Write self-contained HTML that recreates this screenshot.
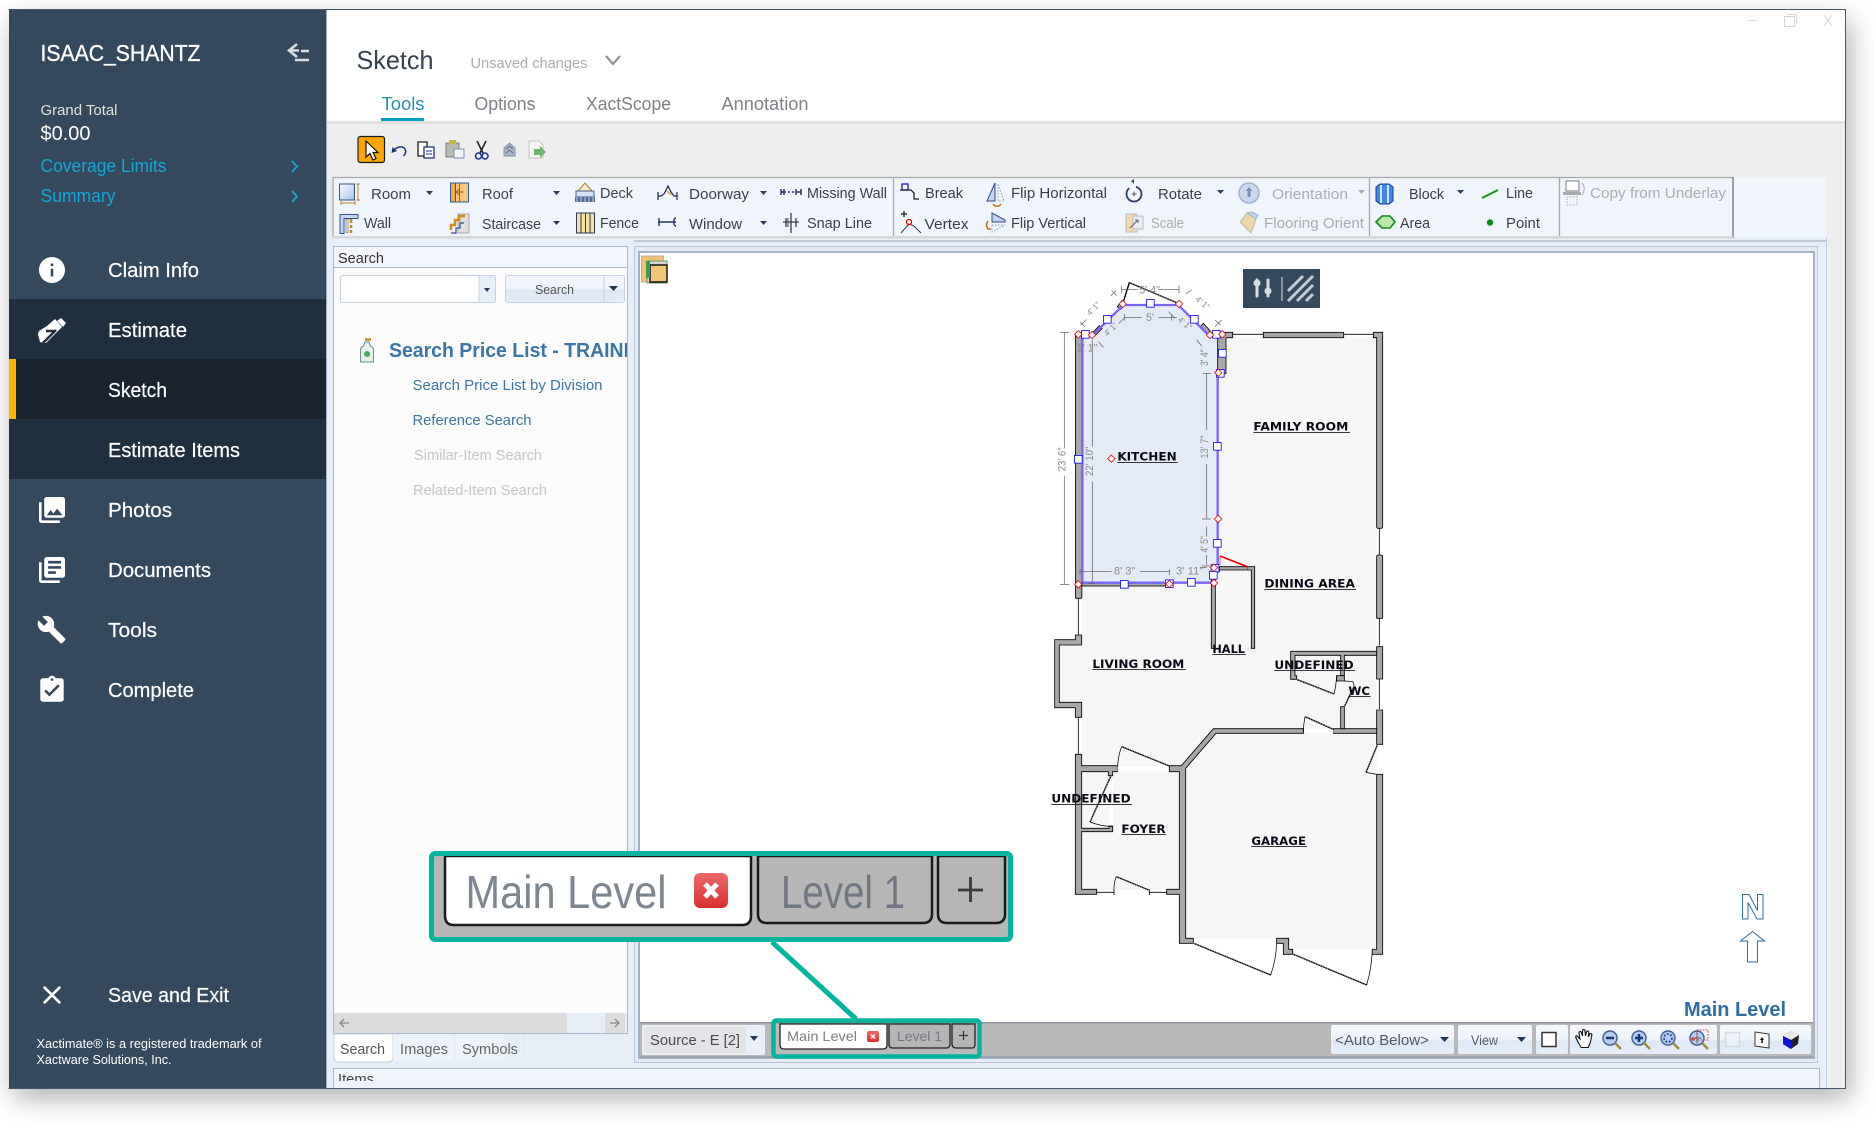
<!DOCTYPE html>
<html lang="en"><head><meta charset="utf-8"><title>Sketch</title>
<style>
html,body{margin:0;padding:0;background:#fff;width:1874px;height:1124px;overflow:hidden}
#sh{position:absolute;left:9px;top:10px;width:1837px;height:1078px;box-shadow:4px 10px 26px rgba(0,0,0,.32)}
svg{position:absolute;left:0;top:0;display:block}
text{font-family:"Liberation Sans",sans-serif;fill:#333;white-space:pre}
.w{fill:#fff}.s{fill:#e8eef8}
.r{font-size:15px;fill:#3a3f47}.d{font-size:15px;fill:#aaaeb4}
.n{font-size:20px;fill:#fff;stroke:#fff;stroke-width:.2}
.wl{fill:#a8a8a8;stroke:#000;stroke-width:2.5}
.bl{stroke:#000;stroke-width:2.5;fill:none}
.dr{fill:none;stroke:#000;stroke-width:4}
.dw{fill:none;stroke:#fff;stroke-width:1.4;stroke-dasharray:4 4}
.lb{font-family:"DejaVu Sans",sans-serif;font-weight:700;font-size:34px;fill:#0a0a14}
.dm{font-size:33px;fill:#8a8a86}
.dl{stroke:#666;stroke-width:2.2;fill:none}
</style></head><body>
<div id="sh"></div>
<svg width="1874" height="1124" viewBox="0 0 1874 1124" xmlns="http://www.w3.org/2000/svg">
<defs>
<linearGradient id="bt" x1="0" y1="0" x2="0" y2="1"><stop offset="0" stop-color="#f3f7fc"/><stop offset=".5" stop-color="#eef3fa"/><stop offset=".55" stop-color="#dde7f4"/><stop offset="1" stop-color="#e6edf7"/></linearGradient>
<linearGradient id="rm" x1="0" y1="0" x2="1" y2="1"><stop offset="0" stop-color="#fff"/><stop offset="1" stop-color="#9fc1ee"/></linearGradient>
<linearGradient id="xr" x1="0" y1="0" x2="0" y2="1"><stop offset="0" stop-color="#ef6a6a"/><stop offset="1" stop-color="#d8312f"/></linearGradient>
<clipPath id="cp"><rect x="333" y="330" width="294" height="60"/></clipPath>
<clipPath id="ci"><rect x="330" y="1066" width="100" height="15"/></clipPath>
<rect id="h" x="-11.5" y="-11.5" width="23" height="23" fill="#fff" stroke="#1414f0" stroke-width="2.6"/>
<path id="k" d="M0-11L11 0 0 11-11 0Z" fill="#fff" stroke="#e80000" stroke-width="2.4"/>
<g id="mg"><circle cx="8" cy="8" r="7" fill="#b6cdf0" stroke="#3d5f8f" stroke-width="1.4"/><path d="M13 13l6 6" stroke="#a08a3c" stroke-width="2.4"/></g>
</defs>

<!-- window -->
<rect x="9" y="10" width="1837" height="1078" fill="#eeeeee"/>
<rect x="327" y="10" width="1518" height="112" fill="#fff"/>
<rect x="327" y="121" width="1518" height="3" fill="#e0e0e0"/>
<rect x="327" y="237" width="1499" height="851" fill="#e8eef7"/>
<path d="M8.5 9.5H1845.5V1088.5H8.500" fill="none" stroke="#46566a" stroke-width="1"/>

<!-- sidebar -->
<rect x="9" y="10" width="317" height="1078" fill="#35495e"/>
<rect x="9" y="299" width="317" height="180" fill="#202f3e"/>
<rect x="9" y="359" width="317" height="60" fill="#1a242e"/>
<rect x="9" y="359" width="7" height="60" fill="#fdb400"/>
<rect x="326" y="10" width="1" height="1078" fill="#9db0c4"/>

<text x="40.500" y="61" font-size="23" textLength="160" lengthAdjust="spacingAndGlyphs" style="fill:#fff" stroke="#fff" stroke-width=".35">ISAAC_SHANTZ</text>
<path d="M297 44l-8 6.500 8 6.500M290 50.500h9M301 51h8M295 60h14" fill="none" stroke="#d7dde3" stroke-width="2.600"/>
<text x="40.500" y="115" font-size="15" textLength="77" lengthAdjust="spacingAndGlyphs" style="fill:#dfe3dc">Grand Total</text>
<text x="40.500" y="140" font-size="20" textLength="50" lengthAdjust="spacingAndGlyphs" style="fill:#fff">$0.00</text>
<text x="40.500" y="172" font-size="18" textLength="126" lengthAdjust="spacingAndGlyphs" style="fill:#13a8d4">Coverage Limits</text>
<text x="40.500" y="202" font-size="18" textLength="75" lengthAdjust="spacingAndGlyphs" style="fill:#13a8d4">Summary</text>
<path d="M292 161l5 5.500-5 5.500M292 191l5 5.500-5 5.500" fill="none" stroke="#13a8d4" stroke-width="1.800"/>

<g class="nv">
<text class="n" x="108" y="277" textLength="91" lengthAdjust="spacingAndGlyphs">Claim Info</text>
<text class="n" x="108" y="337" textLength="79" lengthAdjust="spacingAndGlyphs">Estimate</text>
<text class="n" x="108" y="397" textLength="59" lengthAdjust="spacingAndGlyphs">Sketch</text>
<text class="n" x="108" y="457" textLength="132" lengthAdjust="spacingAndGlyphs">Estimate Items</text>
<text class="n" x="108" y="517" textLength="64" lengthAdjust="spacingAndGlyphs">Photos</text>
<text class="n" x="108" y="577" textLength="103" lengthAdjust="spacingAndGlyphs">Documents</text>
<text class="n" x="108" y="637" textLength="49" lengthAdjust="spacingAndGlyphs">Tools</text>
<text class="n" x="108" y="697" textLength="86" lengthAdjust="spacingAndGlyphs">Complete</text>
<text class="n" x="108" y="1002" textLength="121" lengthAdjust="spacingAndGlyphs">Save and Exit</text>
</g>
<text x="36.500" y="1048" font-size="13" textLength="225" lengthAdjust="spacingAndGlyphs" style="fill:#fff">Xactimate® is a registered trademark of</text>
<text x="36.500" y="1064" font-size="13" textLength="135" lengthAdjust="spacingAndGlyphs" style="fill:#fff">Xactware Solutions, Inc.</text>

<g fill="#fff">
<path transform="translate(36.400 254.400) scale(1.300)" d="M12 2C6.480 2 2 6.480 2 12s4.480 10 10 10 10-4.480 10-10S17.520 2 12 2zm1 15h-2v-6h2v6zm0-8h-2V7h2v2z"/>
<path d="M39 331l8-5 8-7 7 8-16 16-6-1z"/><path d="M39 331l-1 3 2 8 6 1z"/><path d="M57 321l4-3 5 5-3 4z"/><path d="M46 331h9M43 343l13-13" stroke="#202f3e" stroke-width="2.500" fill="none"/>
<path transform="translate(36.400 494.400) scale(1.300)" d="M22 16V4c0-1.100-.9-2-2-2H8c-1.100 0-2 .9-2 2v12c0 1.100.9 2 2 2h12c1.100 0 2-.9 2-2zm-11-4l2.030 2.710L16 11l4 5H8l3-4zM2 6v14c0 1.100.9 2 2 2h14v-2H4V6H2z"/>
<path transform="translate(36.400 554.400) scale(1.300)" d="M4 6H2v14c0 1.100.9 2 2 2h14v-2H4V6zm16-4H8c-1.100 0-2 .9-2 2v12c0 1.100.9 2 2 2h12c1.100 0 2-.9 2-2V4c0-1.100-.9-2-2-2zm-1 9H9V9h10v2zm-4 4H9v-2h6v2zm4-8H9V5h10v2z"/>
<path transform="translate(36.500 614.500) scale(1.260)" d="M22.700 19l-9.100-9.100c.9-2.300.4-5-1.500-6.900-2-2-5-2.400-7.400-1.300L9 6 6 9 1.600 4.700C.4 7.100.9 10.100 2.900 12.100c1.900 1.900 4.600 2.400 6.900 1.500l9.100 9.100c.4.4 1 .4 1.400 0l2.300-2.300c.5-.4.5-1.100.1-1.400z"/>
<path transform="translate(36.400 674.400) scale(1.300)" d="M19 3h-4.180C14.400 1.840 13.300 1 12 1c-1.300 0-2.400.84-2.820 2H5c-1.100 0-2 .9-2 2v14c0 1.100.9 2 2 2h14c1.100 0 2-.9 2-2V5c0-1.100-.9-2-2-2zm-7 0c.55 0 1 .45 1 1s-.45 1-1 1-1-.45-1-1 .45-1 1-1zm-2 14l-4-4 1.410-1.410L10 14.170l6.590-6.590L18 9l-8 8z"/>
<path transform="translate(36.400 979.400) scale(1.300)" d="M19 6.410L17.590 5 12 10.590 6.410 5 5 6.410 10.590 12 5 17.590 6.410 19 12 13.410 17.590 19 19 17.590 13.410 12z"/>
</g>

<!-- header -->
<text x="356.500" y="69" font-size="26" textLength="77" lengthAdjust="spacingAndGlyphs" style="fill:#34414f">Sketch</text>
<text x="470.500" y="68" font-size="15" textLength="117" lengthAdjust="spacingAndGlyphs" style="fill:#a9adb2">Unsaved changes</text>
<path d="M606 56l7 8 7-8" fill="none" stroke="#8d9298" stroke-width="2.200"/>
<text x="381.500" y="110" font-size="18" textLength="43" lengthAdjust="spacingAndGlyphs" style="fill:#2b8fb0">Tools</text>
<text x="474.500" y="110" font-size="18" textLength="61" lengthAdjust="spacingAndGlyphs" style="fill:#7d8288">Options</text>
<text x="586" y="110" font-size="18" textLength="85" lengthAdjust="spacingAndGlyphs" style="fill:#7d8288">XactScope</text>
<text x="721.500" y="110" font-size="18" textLength="87" lengthAdjust="spacingAndGlyphs" style="fill:#7d8288">Annotation</text>
<rect x="381" y="118" width="43" height="3" fill="#00a0c4"/>
<path d="M1748 20.500h9" stroke="#ddd" stroke-width="1"/>
<path d="M1784.500 16.500h10v10h-10zM1787 14.500h9.500v9" fill="none" stroke="#d5d5d5"/>
<path d="M1824 15l8 11M1832 15l-8 11" stroke="#d5d5d5"/>

<!-- quick toolbar -->
<rect x="358" y="136.500" width="26.500" height="26" rx="2.500" fill="#ffa500" stroke="#1d1d1d" stroke-width="1.200"/>
<path d="M366 141v16l4-3.500 3 6.500 3-1.500-3-6h5z" fill="#fff" stroke="#111" stroke-width="1.200"/>
<path d="M391.500 153l1-6 4.500 4z" fill="#17367a"/><path d="M394 150c4-4 9-4 11-1 1.500 2.500.5 5-1.500 7" fill="none" stroke="#17367a" stroke-width="1.500"/>
<path d="M418 142h9l0 14h-9z" fill="#fff" stroke="#1c1c1c" stroke-width="1.300"/><path d="M424 147h10v11h-10z" fill="#fff" stroke="#1c2f7a" stroke-width="1.300"/><path d="M426 151h6M426 154h6" stroke="#1c2f7a"/>
<rect x="446" y="143" width="13" height="14" fill="#b9bdb1" stroke="#7b7f72"/><rect x="449" y="140" width="7" height="4" fill="#c8b63c"/><rect x="454" y="149" width="10" height="9" fill="#f2f5fb" stroke="#7a8fb5"/>
<path d="M477 141l6 12M486 141l-6 12" stroke="#222" stroke-width="1.600"/><circle cx="478.500" cy="156" r="3" fill="none" stroke="#24379a" stroke-width="1.600"/><circle cx="485" cy="156" r="3" fill="none" stroke="#24379a" stroke-width="1.600"/>
<path d="M504 148l5.500-5 5.500 5v8h-11z" fill="#aab6c6" stroke="#8492a6"/><path d="M506 149l3.500-3 3.500 3M506 153l3.500-3 3.500 3" stroke="#5f7183" fill="none"/>
<path d="M529 141h10l4 4v13h-14z" fill="#f4f4f4" stroke="#c4c4c4"/><path d="M534 149h6v-3l6 6-6 6v-3h-6z" fill="#70b56c"/>

<!-- ribbon -->
<rect x="332" y="177" width="1494" height="60" fill="#f0f4fb"/>
<path d="M333 237.500V177.500H1733V237.500H333" fill="none" stroke="#a7a9ab" stroke-width="1.300"/>
<path d="M1733 177v61" stroke="#8e9091" stroke-width="1.600"/>
<path d="M893.500 177v60M1369.500 177v60M1559.500 177v60" stroke="#a7a9ab" stroke-width="1.300"/>
<rect x="333" y="236" width="1400" height="2.500" fill="#d5d8da"/>

<text class="r" x="371" y="199" textLength="40" lengthAdjust="spacingAndGlyphs">Room</text>
<text class="r" x="482" y="199" textLength="31" lengthAdjust="spacingAndGlyphs">Roof</text>
<text class="r" x="600" y="198" textLength="33" lengthAdjust="spacingAndGlyphs">Deck</text>
<text class="r" x="689" y="199" textLength="60" lengthAdjust="spacingAndGlyphs">Doorway</text>
<text class="r" x="807" y="198" textLength="80" lengthAdjust="spacingAndGlyphs">Missing Wall</text>
<text class="r" x="925" y="198" textLength="38" lengthAdjust="spacingAndGlyphs">Break</text>
<text class="r" x="1011" y="198" textLength="96" lengthAdjust="spacingAndGlyphs">Flip Horizontal</text>
<text class="r" x="1158" y="199" textLength="44" lengthAdjust="spacingAndGlyphs">Rotate</text>
<text class="d" x="1272" y="199" textLength="76" lengthAdjust="spacingAndGlyphs">Orientation</text>
<text class="r" x="1409" y="199" textLength="35" lengthAdjust="spacingAndGlyphs">Block</text>
<text class="r" x="1506" y="198" textLength="27" lengthAdjust="spacingAndGlyphs">Line</text>
<text class="d" x="1590" y="198" textLength="136" lengthAdjust="spacingAndGlyphs">Copy from Underlay</text>

<text class="r" x="364" y="228" textLength="27" lengthAdjust="spacingAndGlyphs">Wall</text>
<text class="r" x="482" y="229" textLength="59" lengthAdjust="spacingAndGlyphs">Staircase</text>
<text class="r" x="600" y="228" textLength="39" lengthAdjust="spacingAndGlyphs">Fence</text>
<text class="r" x="689" y="229" textLength="53" lengthAdjust="spacingAndGlyphs">Window</text>
<text class="r" x="807" y="228" textLength="65" lengthAdjust="spacingAndGlyphs">Snap Line</text>
<text class="r" x="924.500" y="229" textLength="44" lengthAdjust="spacingAndGlyphs">Vertex</text>
<text class="r" x="1011" y="228" textLength="75" lengthAdjust="spacingAndGlyphs">Flip Vertical</text>
<text class="d" x="1151" y="228" textLength="33" lengthAdjust="spacingAndGlyphs">Scale</text>
<text class="d" x="1264" y="228" textLength="100" lengthAdjust="spacingAndGlyphs">Flooring Orient</text>
<text class="r" x="1400" y="228" textLength="30" lengthAdjust="spacingAndGlyphs">Area</text>
<text class="r" x="1506" y="228" textLength="34" lengthAdjust="spacingAndGlyphs">Point</text>

<g fill="#2a3b5a">
<path d="M426 191h7l-3.500 4zM553 191h7l-3.500 4zM760 191h7l-3.500 4zM553 221h7l-3.500 4zM760 221h7l-3.500 4zM1217 190h7l-3.500 4zM1457 190h7l-3.500 4z"/>
<path d="M1358 190h7l-3.500 4z" fill="#a8aeb8"/>
</g>

<!-- ribbon icons -->
<rect x="339.500" y="184" width="15" height="16" fill="url(#rm)" stroke="#37517e"/><path d="M358 184v16M356 184h4M356 200h4M341 203h14M341 201v4M355 201v4" stroke="#b98a2a" fill="none"/>
<rect x="450.500" y="183" width="18" height="19" fill="#f7c777" stroke="#2f5a9c"/><path d="M459.500 183v19M456 192l3.500-3M456 192l3.500 3M456 192h8" stroke="#9a6a1c" fill="none"/><rect x="450.500" y="183" width="5" height="19" fill="#f3ab3d" stroke="#2f5a9c"/>
<path d="M578 191l7-8 7 8z" fill="#f6eed0" stroke="#ab8526"/><rect x="576" y="191" width="18" height="6" fill="#d5e3f8" stroke="#4a5f88"/><rect x="575" y="197" width="20" height="5" fill="#506a9a"/><path d="M577 197v5M581 197v5M585 197v5M589 197v5M593 197v5" stroke="#fff" stroke-width=".7"/>
<path d="M658 196h3l3-2 4-8 3 6 3 4h3M658 192v8M677 192v8" fill="none" stroke="#1e2a4a" stroke-width="1.200"/><path d="M666 190l5 5" stroke="#b78720"/>
<path d="M781 189v6M784 189v6M788 192h2M792 192h2M796 189v6M801 189v6" stroke="#26306e" stroke-width="1.500"/><path d="M781 192h5M796 192h5" stroke="#26306e" stroke-width="1.500"/>
<rect x="902" y="184" width="6" height="6" fill="#fff" stroke="#1111e0" stroke-width="1.300"/><path d="M900 190h11l3 3v6h5" fill="none" stroke="#222" stroke-width="1.300"/><path d="M906 197h.1M910 197h.1" stroke="#556" stroke-width="1.500"/>
<path d="M995 183v18h-8z" fill="#c6d5ee" stroke="#2c4b82"/><path d="M998 184v17l6 0z" fill="none" stroke="#8ea3c5" stroke-dasharray="1.500 1.500"/><path d="M993 204c2 3 6 3 8 0" fill="none" stroke="#b66e10" stroke-width="1.500"/>
<circle cx="1134" cy="194" r="7.500" fill="#f5f7fc" stroke="#2b3e6e" stroke-width="1.800" stroke-dasharray="30 7"/><path d="M1134 184l-3-3 3-2z" fill="#2b3e6e"/><path d="M1131.500 194h5M1134 191.500v5" stroke="#333" stroke-width=".8"/>
<circle cx="1249" cy="193" r="10" fill="#cad8ee" stroke="#a3b4d2" stroke-width="1.500"/><path d="M1249 187l-3.500 4h2v6h3v-6h2z" fill="#7d8fb0"/>
<path d="M1376 187l4-3h9l4 3v14l-4 3h-9l-4-3z" fill="#3d86ee" stroke="#143f9e"/><path d="M1381 185v18M1388 185v18" stroke="#d8e6fb" stroke-width="2"/>
<path d="M1482 198l16-8" stroke="#119a11" stroke-width="2"/>
<rect x="1566" y="181" width="13" height="10" fill="#fff" stroke="#777"/><rect x="1563" y="192" width="18" height="3" fill="#aaa"/><rect x="1567" y="197" width="10" height="8" fill="none" stroke="#aaa" stroke-dasharray="1.500 1.500"/><path d="M1582 183c3 3 3 8 0 12" fill="none" stroke="#aaa"/>

<path d="M340 214.500h18v4h-14v15h-4z" fill="#c7d6ef" stroke="#32528c"/><path d="M346 219.500h2v13h-2z" fill="#eee" stroke="#99a"/><path d="M351 219v4M351 225v3M351 230v3" stroke="#c09215" stroke-width="2.500"/>
<rect x="458" y="214" width="11" height="19" fill="#ddd" stroke="#aaa"/><path d="M451 230v-5h4v-5h4v-4h6" fill="none" stroke="#d08a1f" stroke-width="2.500"/><path d="M451 233h5v-5h4v-5h4" fill="none" stroke="#324d89" stroke-width="1.200"/>
<rect x="576.500" y="213" width="18" height="20" fill="#f6e3a3" stroke="#2d3a55"/><path d="M581 213v20M585.500 213v20M590 213v20" stroke="#2d3a55"/>
<path d="M658 222h18M659 218v8M676 218c-3 0-3 8 0 8" fill="none" stroke="#27336f" stroke-width="1.400"/>
<path d="M783 222h16M791 213v20M786 218v9M796 218v9" stroke="#1c1c1c" stroke-width="1.100"/><path d="M788 218v9" stroke="#33418c"/>
<path d="M901 214h6M904 211v6" stroke="#333" stroke-width="1.400"/><path d="M901 233l8-9 5 2 7 7" fill="none" stroke="#33395e"/><circle cx="909" cy="222" r="2.500" fill="#fff" stroke="#e00" stroke-width="1.300"/>
<path d="M992 222v-9l13 7v2z" fill="#c7d6ee" stroke="#2c4b82"/><path d="M992 225h13l-13 7z" fill="none" stroke="#8ea3c5" stroke-dasharray="1.500 1.500"/><path d="M988 221c-2 3-2 5 0 8h3" fill="none" stroke="#b66e10" stroke-width="1.500"/>
<rect x="1126" y="214" width="11" height="18" fill="#f2d9a8" stroke="#b7bdc7"/><rect x="1133" y="216" width="10" height="13" fill="#e9edf3" stroke="#b7bdc7"/><path d="M1130 228l8-8M1138 220h-3M1138 220v3" stroke="#666"/>
<path d="M1240 222l7-9 9 6-5 14z" fill="#ecd8a6" stroke="#b9b9a0"/><path d="M1247 213l9 6 2-4-6-3z" fill="#bcd2ec" stroke="#a4b4c9"/>
<path d="M1376 222l6-6h8l5 6-5 6h-8z" fill="#b8e8a8" stroke="#12891b" stroke-width="1.600"/>
<circle cx="1490" cy="222.500" r="3.200" fill="#0c8a17"/>

<!-- search panel -->
<rect x="333" y="246" width="294" height="767" fill="#fbfbfc"/>
<path d="M333.500 1034V246.500H627.500V1034" fill="none" stroke="#a9b7cf"/>
<rect x="334" y="247" width="293" height="20" fill="#f3f6fc"/><path d="M334 267.500h293" stroke="#a9b7cf"/>
<text x="338" y="263" font-size="15" textLength="46" lengthAdjust="spacingAndGlyphs">Search</text>
<rect x="340.500" y="275.500" width="155" height="27" rx="2" fill="#fff" stroke="#c6d3e6"/><rect x="479" y="276" width="16" height="26" fill="#e8eef8"/><path d="M479 276v26" stroke="#c6d3e6"/><path d="M484 288h6l-3 4z" fill="#2a3b5a"/>
<rect x="505.500" y="275.500" width="119" height="27" rx="2" fill="url(#bt)" stroke="#c6d3e6"/><path d="M604 276v26" stroke="#c6d3e6"/><path d="M609 286h9l-4.500 5z" fill="#22344f"/>
<text x="535" y="294" font-size="13" textLength="39" lengthAdjust="spacingAndGlyphs" style="fill:#555">Search</text>
<path d="M365 342h4l1.500 4c2 .8 3 2 3 4v12h-13v-12c0-2 1-3.200 3-4z" fill="#e6efe8" stroke="#6a8f96"/><rect x="365" y="338" width="6" height="3" fill="#c6a23d"/><circle cx="367" cy="354" r="3" fill="#45a85c"/>
<g clip-path="url(#cp)"><text x="389" y="357" font-size="20" font-weight="700" textLength="240" lengthAdjust="spacingAndGlyphs" style="fill:#3a75a5">Search Price List - TRAINI</text></g>
<text x="412.500" y="390" font-size="15" textLength="190" lengthAdjust="spacingAndGlyphs" style="fill:#3c75a4">Search Price List by Division</text>
<text x="412.500" y="425" font-size="15" textLength="119" lengthAdjust="spacingAndGlyphs" style="fill:#3c75a4">Reference Search</text>
<text x="414" y="460" font-size="15" textLength="128" lengthAdjust="spacingAndGlyphs" style="fill:#c4c7c9">Similar-Item Search</text>
<text x="413" y="495" font-size="15" textLength="134" lengthAdjust="spacingAndGlyphs" style="fill:#c4c7c9">Related-Item Search</text>
<rect x="334" y="1013" width="233" height="20" fill="#dcdcdc"/><rect x="605" y="1013" width="20" height="20" fill="#dcdcdc"/>
<path d="M349 1023h-8M344 1019l-4 4 4 4M610 1023h8M615 1019l4 4-4 4" fill="none" stroke="#8a8a8a" stroke-width="1.300"/>
<path d="M333.500 1033.500H627.500" stroke="#a9b7cf"/>
<path d="M334 1034v23q0 5 5 5h49q5 0 5-5v-23z" fill="#fff" stroke="#c3d0e2"/>
<rect x="393" y="1034" width="112" height="26" fill="#edf2f9"/><path d="M454.500 1034v26M524 1034v26" stroke="#dde5f0"/>
<text x="340" y="1054" font-size="15" textLength="45" lengthAdjust="spacingAndGlyphs" style="fill:#555">Search</text>
<text x="400" y="1054" font-size="15" textLength="48" lengthAdjust="spacingAndGlyphs" style="fill:#666">Images</text>
<text x="462" y="1054" font-size="15" textLength="56" lengthAdjust="spacingAndGlyphs" style="fill:#666">Symbols</text>
<!-- items panel -->
<rect x="333.500" y="1068.500" width="1486" height="19" fill="#f0f4fb" stroke="#a9b7cf"/>
<rect x="334" y="1081" width="1485" height="7" fill="#eef3fb"/>
<rect x="1826" y="237" width="1" height="851" fill="#c0cde0"/>
<g clip-path="url(#ci)"><text x="338" y="1084" font-size="15" textLength="36" lengthAdjust="spacingAndGlyphs" style="fill:#444">Items</text></g>

<!-- sketch panel -->
<rect x="1818" y="241" width="8" height="823" fill="#e8eef7"/>
<path d="M634 241H1826" stroke="#bccadc" stroke-width="2"/>
<rect x="634.500" y="246.500" width="1183" height="816" fill="#e4ebf5" stroke="#b9c6da"/>
<rect x="639" y="252" width="1175" height="806" fill="#fff" stroke="#a5b3c8" stroke-width="2"/>
<rect x="640" y="1023" width="1173" height="33" fill="#b9b9b9"/>
<rect x="640" y="1022" width="1173" height="1.500" fill="#8f969e"/>
<rect x="640" y="1056" width="1173" height="2" fill="#9aa3ae"/>

<!-- layer icon -->
<rect x="641.500" y="256" width="22" height="26" fill="#f2c171" stroke="#b6b0a0"/><rect x="647" y="261" width="20" height="22" fill="#d6d6d0" stroke="#6c9862"/><rect x="650" y="265" width="17" height="17" fill="#f3c478" stroke="#151515" stroke-width="1.500"/><rect x="646" y="261" width="4" height="17" fill="#3a9f4a"/>

<!-- filter button -->
<rect x="1243" y="269" width="77" height="39" fill="#34495e"/>
<g stroke="#d7dde3" stroke-width="3" stroke-linecap="round"><path d="M1257 280v16M1268 280v16"/></g>
<circle cx="1257" cy="283" r="3.500" fill="#d7dde3"/><circle cx="1268" cy="291" r="3.500" fill="#d7dde3"/>
<path d="M1282 277v24" stroke="#a4afba" stroke-width="1.500"/>
<path d="M1288 291l15-15M1288 301l25-25M1297 301l16-16M1306 301l7-7" stroke="#c3cbd3" stroke-width="3" fill="none"/>

<!-- floor plan: upper group -->
<g transform="translate(1040 270) scale(.33333)">
<path d="M125 200H1010V2038H760L745 2007H437V1860H125V1297H58V1125H125Z" fill="#f6f6f6"/>
<path d="M127 205H155L250 108H415L510 205H533V890L522 938H127Z" fill="#e4eaf6"/>
<!-- top line -->
<path class="bl" d="M578 193H1005"/>
<rect class="wl" x="670" y="187" width="241" height="16"/>
<path class="wl" d="M1000 187H1028V770Q1028 775 1023 775H1014Q1010 775 1010 770V203H1000Z"/>
<path class="bl" d="M1018 775V855"/>
<path class="wl" d="M1014 855H1024Q1028 855 1028 860V1045H1010V860Q1010 855 1014 855Z"/>
<rect class="wl" x="106.500" y="190" width="19" height="795" rx="3"/>
<path class="wl" d="M533 187H578V203H558V310H533Z"/>
<rect class="wl" x="126" y="936" width="262" height="12"/>
<path class="wl" d="M538 890H644V1135H634V900H526V1135H514V905H538Z"/>
<path d="M540 858L622 890" stroke="#f00000" stroke-width="5"/><path d="M540 858V885M622 890V902" stroke="#f00000" stroke-width="2"/>
<path class="wl" d="M178 167L186 176 164 198 156 190Z" stroke-width="2"/>
<path class="wl" d="M482 168L490 160 512 184 503 192Z" stroke-width="2"/>
<path class="wl" d="M232 110L246 92 256 102 242 118Z" stroke-width="2"/>
<path d="M127 938H515L522 935M533 885V310M510 200L415 105H250L156 197M127 205V938" fill="none" stroke="#7a66ff" stroke-width="7"/>
<path d="M248 102L268 38 415 100" class="dr" stroke-width="3"/><path d="M268 38L415 100" class="dw"/>
<path d="M248 102L268 38" fill="none" stroke="#000" stroke-width="3"/>
<!-- dims -->
<path class="dl" d="M60 187H88M60 943H88M73 187V535M73 617V943"/>
<path class="dl" d="M157 210V530M157 635V940M145 940H165"/>
<path class="dl" d="M488 310H512M500 310V480M500 582V745M486 747H512M500 770V800M500 855V885M486 888H510"/>
<path class="dl" d="M120 905H215M300 905H390M388 897V915M120 897V912M480 893H500"/>
<path class="dl" d="M253 132V152M253 142H305M355 142H410M395 132V152"/>
<path class="dl" d="M244 47V70M244 58H293M355 58H417M417 47V70"/>
<path class="dl" d="M120 156L135 170M215 62L230 76M122 165L140 148M212 78L228 62M175 215L190 232M236 160L252 145M470 210L485 228M525 170L545 150M437 72L455 60M525 150L542 165M385 125L405 145"/>
<text class="dm" transform="translate(77 604) rotate(-90)" textLength="72" lengthAdjust="spacingAndGlyphs">23' 6"</text>
<text class="dm" transform="translate(159 618) rotate(-90)" textLength="88" lengthAdjust="spacingAndGlyphs">22' 10"</text>
<text class="dm" transform="translate(504 566) rotate(-90)" textLength="70" lengthAdjust="spacingAndGlyphs">13' 7"</text>
<text class="dm" transform="translate(504 288) rotate(-90)" textLength="50" lengthAdjust="spacingAndGlyphs">3' 4"</text>
<text class="dm" transform="translate(504 848) rotate(-90)" textLength="50" lengthAdjust="spacingAndGlyphs">4' 5"</text>
<text class="dm" x="222" y="914" textLength="64" lengthAdjust="spacingAndGlyphs">8' 3"</text>
<text class="dm" x="408" y="914" textLength="82" lengthAdjust="spacingAndGlyphs">3' 11"</text>
<text class="dm" x="318" y="153" textLength="24" lengthAdjust="spacingAndGlyphs">5'</text>
<text class="dm" x="298" y="70" textLength="62" lengthAdjust="spacingAndGlyphs">5' 4"</text>
<text class="dm" x="110" y="245" textLength="62" lengthAdjust="spacingAndGlyphs">1' 1"</text>
<text class="dm" style="font-size:25px" transform="translate(150 138) rotate(-45)" textLength="46" lengthAdjust="spacingAndGlyphs">4' 1"</text>
<text class="dm" style="font-size:25px" transform="translate(202 200) rotate(-45)" textLength="46" lengthAdjust="spacingAndGlyphs">4' 1"</text>
<text class="dm" style="font-size:25px" transform="translate(465 90) rotate(40)" textLength="46" lengthAdjust="spacingAndGlyphs">4' 1"</text>
<text class="dm" style="font-size:25px" transform="translate(412 152) rotate(40)" textLength="46" lengthAdjust="spacingAndGlyphs">4' 1"</text>
<!-- labels -->
<text class="lb" x="232" y="572" textLength="178" lengthAdjust="spacingAndGlyphs">KITCHEN</text><rect x="232" y="576" width="181" height="2.500" fill="#111"/>
<text class="lb" x="640" y="482" textLength="285" lengthAdjust="spacingAndGlyphs">FAMILY ROOM</text><rect x="640" y="486" width="290" height="2.500" fill="#111"/>
<text class="lb" x="673" y="953" textLength="272" lengthAdjust="spacingAndGlyphs">DINING AREA</text><rect x="673" y="957" width="275" height="2.500" fill="#111"/>
<!-- handles -->
<use href="#h" x="136" y="193"/><use href="#h" x="202" y="148"/><use href="#h" x="331" y="100"/><use href="#h" x="463" y="148"/><use href="#h" x="529" y="193"/><use href="#h" x="547" y="250"/><use href="#h" x="541" y="310"/><use href="#h" x="532" y="529"/><use href="#h" x="532" y="820"/><use href="#h" x="525" y="895"/><use href="#h" x="520" y="916"/><use href="#h" x="454" y="937"/><use href="#h" x="388" y="941"/><use href="#h" x="253" y="943"/><use href="#h" x="115" y="568"/>
<use href="#k" x="115" y="193"/><use href="#k" x="156" y="195"/><use href="#k" x="248" y="102"/><use href="#k" x="417" y="102"/><use href="#k" x="510" y="195"/><use href="#k" x="547" y="193"/><use href="#k" x="535" y="308"/><use href="#k" x="534" y="747"/><use href="#k" x="522" y="893"/><use href="#k" x="522" y="939"/><use href="#k" x="388" y="942"/><use href="#k" x="115" y="943"/><use href="#k" x="214" y="566"/>
</g>

<!-- floor plan: lower group -->
<g transform="translate(1040 580) scale(.33333)">
<path class="bl" d="M115 55V165M115 412V523M1018 115V197M1018 297V387"/>
<path class="wl" d="M1010 200H1028V297H1010Z"/>
<path class="wl" d="M1010 390H1028V493H1010Z"/>
<path class="wl" d="M106 165H125V195H58V367H125V412H106V383H44V179H106Z"/>
<path class="wl" d="M106 523H125V557H233V575H218V587H205V575H125V745H207V738H218V755H125V928H170V943H106Z"/>
<rect x="233" y="559" width="155" height="15" fill="#fff"/><rect x="207" y="590" width="12" height="146" fill="#fff"/>
<path class="wl" d="M388 557H424L520 446H790V460H528L437 565V1075H460V1090H418V943H380V928H418V575H388Z"/>
<path class="wl" d="M880 446H1010V460H880Z"/>
<path class="wl" d="M902 380H913V446H902Z"/>
<path class="wl" d="M752 214H1010V226H913V287H902V226H765V287H770V298H752Z"/>
<path class="wl" d="M890 287H913V303H890Z"/>
<rect x="1010" y="583" width="18" height="540" class="wl"/>
<path class="wl" d="M997 1108H1010V1123H997Z"/>
<rect x="998" y="1109" width="14" height="13" fill="#a8a8a8"/>
<path class="wl" d="M710 1075H746V1108H758V1123H730V1090H710Z"/>
<path class="bl" d="M170 937H222M328 937H380M222 926V945M328 928V945"/>
<rect x="795" y="448" width="85" height="12" fill="#fff"/>
<path d="M462 1090L692 1185M758 1122L980 1215M770 298L882 342M795 410L880 448M245 500L388 558M213 587L150 726M1012 495L978 577M229 890L326 930M913 380L942 320" class="dr"/>
<path d="M462 1090L692 1185M758 1122L980 1215M770 298L882 342M795 410L880 448M245 500L388 558M213 587L150 726M1012 495L978 577M229 890L326 930M913 380L942 320" class="dw"/>
<path d="M692 1185Q708 1140 710 1090M980 1215Q995 1165 997 1108M882 342Q888 320 890 287M790 460Q790 435 795 410M233 557Q235 525 245 500M150 726Q180 738 218 740M978 577L1010 583M222 926Q222 905 229 890M913 303L938 305Q942 310 942 320" fill="none" stroke="#000" stroke-width="2.200"/>
<text class="lb" x="517" y="219" textLength="98" lengthAdjust="spacingAndGlyphs">HALL</text><rect x="517" y="222" width="100" height="2.500" fill="#111"/>
<text class="lb" x="157" y="264" textLength="276" lengthAdjust="spacingAndGlyphs">LIVING ROOM</text><rect x="157" y="267" width="280" height="2.500" fill="#111"/>
<text class="lb" x="703" y="267" textLength="238" lengthAdjust="spacingAndGlyphs">UNDEFINED</text><rect x="703" y="270" width="242" height="2.500" fill="#111"/>
<text class="lb" x="925" y="345" textLength="65" lengthAdjust="spacingAndGlyphs">WC</text><rect x="925" y="348" width="67" height="2.500" fill="#111"/>
<text class="lb" x="34" y="668" textLength="238" lengthAdjust="spacingAndGlyphs">UNDEFINED</text><rect x="34" y="672" width="242" height="2.500" fill="#111"/>
<text class="lb" x="244" y="759" textLength="133" lengthAdjust="spacingAndGlyphs">FOYER</text><rect x="244" y="762" width="134" height="2.500" fill="#111"/>
<text class="lb" x="634" y="795" textLength="164" lengthAdjust="spacingAndGlyphs">GARAGE</text><rect x="634" y="798" width="167" height="2.500" fill="#111"/>
</g>

<!-- north arrow -->
<path d="M1742.500 894.500h6.500l8.500 16v-16h5.500v24.500h-6l-9-16.500v16.500h-5.500z" fill="#fff" stroke="#2f6ea5" stroke-width="1"/>
<path d="M1752.500 931.500l12 9.500h-7v21h-10v-21h-7z" fill="#fff" stroke="#2f6ea5" stroke-width="1"/>
<text x="1684" y="1016" font-size="20" font-weight="700" textLength="102" lengthAdjust="spacingAndGlyphs" style="fill:#2f6ea5">Main Level</text>

<!-- status bar -->
<rect x="642" y="1025" width="123" height="30" rx="2" fill="#e9eff8"/>
<rect x="644" y="1027" width="102" height="26" fill="#e4e4e6"/>
<text x="650" y="1045" font-size="15" textLength="90" lengthAdjust="spacingAndGlyphs" style="fill:#454a52">Source - E [2]</text>
<path d="M750 1036h8l-4 5z" fill="#22344f"/>

<rect x="1331" y="1025" width="123" height="29" rx="2" fill="url(#bt)"/>
<text x="1335" y="1045" font-size="15" textLength="94" lengthAdjust="spacingAndGlyphs" style="fill:#555a64">&lt;Auto Below&gt;</text>
<path d="M1440 1037h9l-4.500 5z" fill="#22344f"/>
<rect x="1458" y="1025" width="74" height="29" rx="2" fill="url(#bt)"/>
<text x="1471" y="1045" font-size="14" textLength="27" lengthAdjust="spacingAndGlyphs" style="fill:#555a64">View</text>
<path d="M1517 1037h9l-4.500 5z" fill="#22344f"/>
<rect x="1536" y="1025" width="32" height="29" rx="2" fill="url(#bt)"/>
<rect x="1542" y="1032.500" width="14" height="14" fill="#fff" stroke="#333" stroke-width="1.500"/>
<rect x="1570" y="1025" width="147" height="29" rx="2" fill="url(#bt)"/>
<rect x="1720" y="1025" width="91" height="29" rx="2" fill="url(#bt)"/>
<path d="M1578 1042l-2-4c-1-2 1-3 2-1l2 2-1-6c0-2 2-2 2.500 0l1 3 0-5c0-2 2.500-2 2.500 0l.5 5 1-4c.5-2 2.500-1 2.300 1l-.5 4 1.500-3c1-1 2.500 0 2 1.500l-1.500 7-2 5h-7z" fill="#fff" stroke="#111" stroke-width="1.100"/>
<use href="#mg" x="1602" y="1030"/><path d="M1606 1038h8" stroke="#17367a" stroke-width="2.500"/>
<use href="#mg" x="1631" y="1030"/><path d="M1635 1038h8M1639 1034v8" stroke="#17367a" stroke-width="2.500"/>
<use href="#mg" x="1660" y="1030"/><circle cx="1668" cy="1038" r="4" fill="none" stroke="#2246a5" stroke-width="1.800" stroke-dasharray="2 1.500"/>
<use href="#mg" x="1689" y="1030"/><path d="M1693 1038h8M1697 1033v10" stroke="#555"/><rect x="1697" y="1030" width="11" height="10" fill="none" stroke="#e03a3a" stroke-dasharray="1.500 1.500"/><circle cx="1693" cy="1039" r="1.800" fill="#e03a3a"/>
<rect x="1725.500" y="1032.500" width="14" height="14" fill="#edf1f7" stroke="#d3d9e2" stroke-width="1.500"/>
<path d="M1755 1032l14 2v14l-14-2z" fill="#fff" stroke="#333"/><path d="M1762 1037l-2 3h1.300v3h1.500v-3h1.200z" fill="#111"/>
<path d="M1791 1031l8 4-1 9-7 5-8-5v-8z" fill="#222"/><path d="M1791 1031l8 4-8 5-8-4z" fill="#e9e9e9"/><path d="M1783 1036l8 4v9l-8-5z" fill="#1212d8"/>

<!-- small tabs -->
<path d="M780 1024v21q0 4 4 4h99q4 0 4-4v-21z" fill="#fff" stroke="#222" stroke-width="1.300"/>
<text x="787" y="1041" font-size="14" textLength="70" lengthAdjust="spacingAndGlyphs" style="fill:#7a8087">Main Level</text>
<rect x="867" y="1031" width="12" height="11" rx="2" fill="url(#xr)"/><path d="M871 1034.500l4 4M875 1034.500l-4 4" stroke="#fff" stroke-width="1.500"/>
<path d="M889 1024v20q0 4 4 4h53q4 0 4-4v-20z" fill="#b5b5b5" stroke="#222" stroke-width="1.300"/>
<text x="897" y="1041" font-size="14" textLength="45" lengthAdjust="spacingAndGlyphs" style="fill:#737880">Level 1</text>
<path d="M952 1024v20q0 4 4 4h16q3 0 3-4v-20z" fill="#b5b5b5" stroke="#222" stroke-width="1.300"/>
<path d="M959 1035.500h9M963.500 1031v9" stroke="#333" stroke-width="1.200"/>
<rect x="773.500" y="1020.500" width="206" height="36" rx="3" fill="none" stroke="#00b59d" stroke-width="4.500"/>

<!-- callout -->
<path d="M772 942L856 1019" stroke="#00b59d" stroke-width="5" fill="none"/>
<rect x="431.500" y="853.500" width="579" height="86" rx="4" fill="#b6b6b6" stroke="#00b59d" stroke-width="5"/>
<path d="M445 856v60q0 9 9 9h288q9 0 9-9v-60z" fill="#fff" stroke="#1a1a1a" stroke-width="2.500"/>
<text x="465.500" y="908" font-size="46" textLength="201" lengthAdjust="spacingAndGlyphs" style="fill:#7d8691">Main Level</text>
<rect x="694" y="873" width="34" height="35" rx="6" fill="url(#xr)"/>
<path d="M705 884l12 13M717 884l-12 13" stroke="#fff" stroke-width="5"/>
<path d="M758 856v58q0 9 9 9h156q9 0 9-9v-58z" fill="#b6b6b6" stroke="#1a1a1a" stroke-width="2.500"/>
<text x="781" y="908" font-size="46" textLength="124" lengthAdjust="spacingAndGlyphs" style="fill:#717780">Level 1</text>
<path d="M938 856v58q0 9 9 9h49q9 0 9-9v-58z" fill="#b6b6b6" stroke="#1a1a1a" stroke-width="2.500"/>
<path d="M958 890h25M970.500 877v25" stroke="#3a3a3a" stroke-width="2.800"/>
<rect x="431.500" y="853.500" width="579" height="86" rx="4" fill="none" stroke="#00b59d" stroke-width="5"/>
</svg>
</body></html>
